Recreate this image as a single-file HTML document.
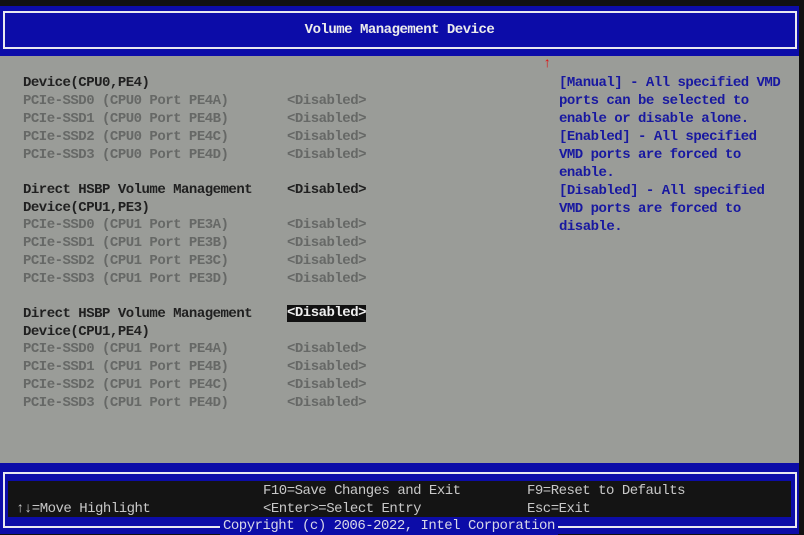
<!DOCTYPE html>
<html><head><style>
body{margin:0;width:804px;height:534px;background:#111;position:relative;overflow:hidden;font-family:"Liberation Mono",monospace;font-size:14px;letter-spacing:-0.5px;font-weight:bold}
.a{position:absolute;white-space:pre;line-height:18px}
#hdr{position:absolute;left:0;top:6px;width:799px;height:50px;background:#0c0ca8}
#hb{position:absolute;left:3px;top:11px;width:790px;height:34px;border:2px solid #e8e8f0}
#body{position:absolute;left:0;top:56px;width:799px;height:407px;background:#9a9c98}
#ftr{position:absolute;left:0;top:463px;width:799px;height:71px;background:#0c0ca8}
#fb{position:absolute;left:3px;top:472px;width:790px;height:52px;border:2px solid #e8e8f0}
#fi{position:absolute;left:8px;top:481px;width:783px;height:36px;background:#141414}
.g{color:#666866}.d{color:#202020}.b{color:#1818a0}.w{color:#ececec}.f{color:#c8c8c8;font-weight:normal}
.sel{background:#111;color:#eee}
</style></head><body>
<div id="hdr"></div><div id="hb"></div>
<div class="a w" style="left:0;width:799px;text-align:center;top:21px">Volume Management Device</div>
<div id="body"></div>
<div class="a" style="left:543px;top:55px;color:#e01010">↑</div>
<div class="a d" style="left:23px;top:74px">Device(CPU0,PE4)</div>
<div class="a g" style="left:23px;top:92px">PCIe-SSD0 (CPU0 Port PE4A)
PCIe-SSD1 (CPU0 Port PE4B)
PCIe-SSD2 (CPU0 Port PE4C)
PCIe-SSD3 (CPU0 Port PE4D)</div>
<div class="a g" style="left:287px;top:92px">&lt;Disabled&gt;
&lt;Disabled&gt;
&lt;Disabled&gt;
&lt;Disabled&gt;</div>
<div class="a d" style="left:23px;top:181px">Direct HSBP Volume Management
Device(CPU1,PE3)</div>
<div class="a d" style="left:287px;top:181px">&lt;Disabled&gt;</div>
<div class="a g" style="left:23px;top:216px">PCIe-SSD0 (CPU1 Port PE3A)
PCIe-SSD1 (CPU1 Port PE3B)
PCIe-SSD2 (CPU1 Port PE3C)
PCIe-SSD3 (CPU1 Port PE3D)</div>
<div class="a g" style="left:287px;top:216px">&lt;Disabled&gt;
&lt;Disabled&gt;
&lt;Disabled&gt;
&lt;Disabled&gt;</div>
<div class="a d" style="left:23px;top:305px">Direct HSBP Volume Management
Device(CPU1,PE4)</div>
<div class="a sel" style="left:287px;top:305px;line-height:17px">&lt;Disabled&gt;</div>
<div class="a g" style="left:23px;top:340px">PCIe-SSD0 (CPU1 Port PE4A)
PCIe-SSD1 (CPU1 Port PE4B)
PCIe-SSD2 (CPU1 Port PE4C)
PCIe-SSD3 (CPU1 Port PE4D)</div>
<div class="a g" style="left:287px;top:340px">&lt;Disabled&gt;
&lt;Disabled&gt;
&lt;Disabled&gt;
&lt;Disabled&gt;</div>
<div class="a b" style="left:559px;top:74px">[Manual] - All specified VMD
ports can be selected to
enable or disable alone.
[Enabled] - All specified
VMD ports are forced to
enable.
[Disabled] - All specified
VMD ports are forced to
disable.</div>
<div id="ftr"></div><div id="fb"></div><div id="fi"></div>
<div class="a f" style="left:263px;top:482px">F10=Save Changes and Exit
&lt;Enter&gt;=Select Entry</div>
<div class="a f" style="left:527px;top:482px">F9=Reset to Defaults
Esc=Exit</div>
<div class="a f" style="left:16px;top:500px">↑↓=Move Highlight</div>
<div class="a f" style="left:220px;top:517px;background:#0c0ca8;padding:0 3px;color:#d8d8e8">Copyright (c) 2006-2022, Intel Corporation</div>
</body></html>
